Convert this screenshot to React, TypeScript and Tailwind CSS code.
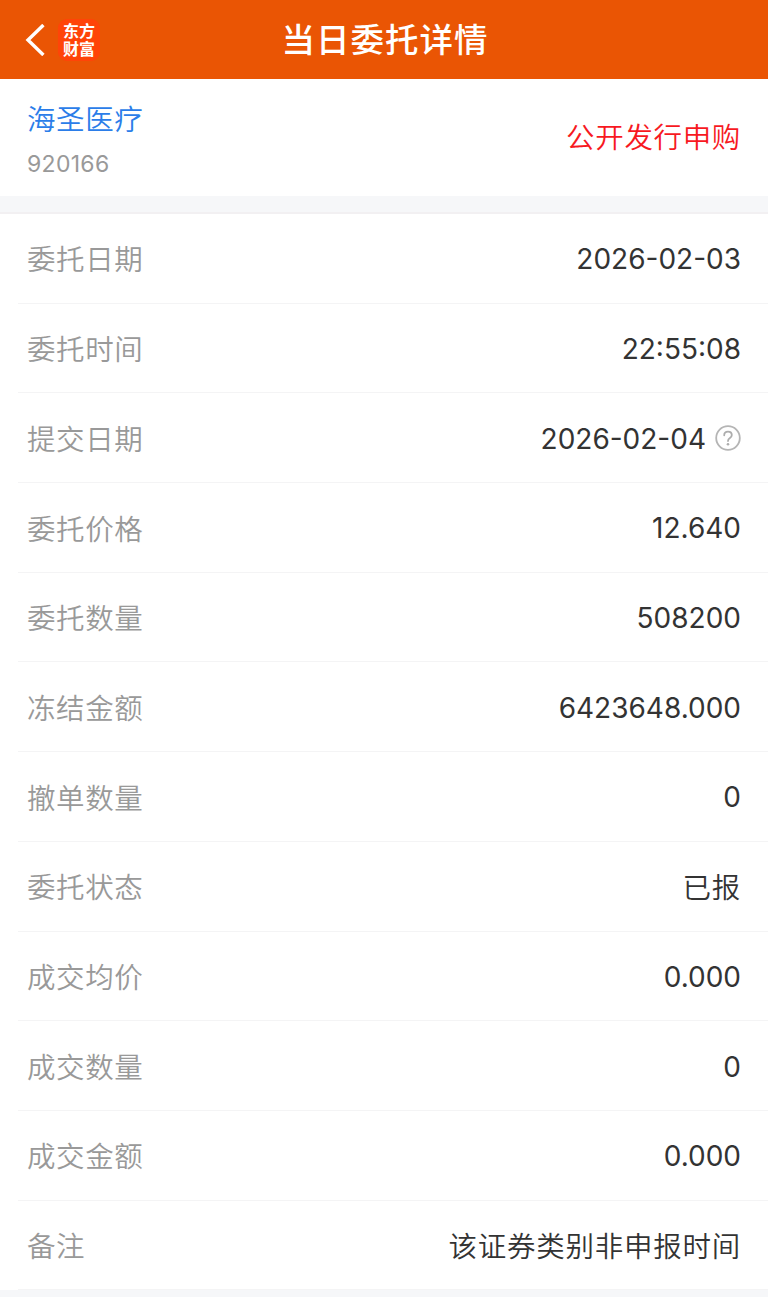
import type { ReactNode } from "react";

type DetailRow = {
  label: string;
  value: string;
  cjk?: boolean;
  extra?: ReactNode;
};

function HelpIcon() {
  return (
    <svg width="26" height="26" viewBox="0 0 26 26" fill="none" className="ml-[9px] shrink-0" aria-label="help">
      <circle cx="13" cy="13" r="11.8" stroke="#b5b5b5" strokeWidth="1.8" />
      <path d="M9.2 10.3c0-2.3 1.6-3.7 3.8-3.7s3.8 1.4 3.8 3.4c0 1.5-.8 2.3-1.9 3.1-1.3.9-1.9 1.5-1.9 3" stroke="#adadad" strokeWidth="1.8" strokeLinecap="round" strokeLinejoin="round" />
      <circle cx="13" cy="19.2" r="1.3" fill="#adadad" />
    </svg>
  );
}

const rows: DetailRow[] = [
  { label: "委托日期", value: "2026-02-03" },
  { label: "委托时间", value: "22:55:08" },
  { label: "提交日期", value: "2026-02-04", extra: <HelpIcon /> },
  { label: "委托价格", value: "12.640" },
  { label: "委托数量", value: "508200" },
  { label: "冻结金额", value: "6423648.000" },
  { label: "撤单数量", value: "0" },
  { label: "委托状态", value: "已报", cjk: true },
  { label: "成交均价", value: "0.000" },
  { label: "成交数量", value: "0" },
  { label: "成交金额", value: "0.000" },
  { label: "备注", value: "该证券类别非申报时间", cjk: true },
];

function Header() {
  return (
    <header className="grid h-[79px] grid-cols-[1fr_auto_1fr] items-center bg-[#ea5504] text-white">
      <div className="flex items-center pl-[25px]">
        <svg width="20" height="32" viewBox="0 0 20 32" fill="none" aria-label="back">
          <path d="M17.2 2.2 3 16l14.2 13.8" stroke="#fff" strokeWidth="3.4" strokeLinecap="square" />
        </svg>
        <div className="ml-[13px] flex h-[42px] w-[42px] items-center justify-center rounded-[9px] bg-[#ff4408]">
          <span className="font-['Noto_Sans_CJK_SC',sans-serif] text-[16px] leading-[17.5px] font-bold">
            东方
            <br />
            财富
          </span>
        </div>
      </div>
      <h1 className="pt-[2px] pl-[2px] text-[33.5px] leading-none font-medium tracking-[1px]">当日委托详情</h1>
      <div />
    </header>
  );
}

function Row({ label, value, cjk, extra }: DetailRow) {
  return (
    <div className="ml-[18px] flex h-[89.7px] items-center justify-between border-b border-[#f4f4f5] pr-[27px] pl-[9px]">
      <span className="pt-[5px] text-[28.5px] font-[350] tracking-[0.6px] text-[#999]">{label}</span>
      <div className="flex items-center text-[#333]">
        {cjk ? (
          <span className="pt-[5px] text-[28.5px] font-[350] tracking-[0.75px]">{value}</span>
        ) : (
          <span className="pt-[2px] text-[28px]">{value}</span>
        )}
        {extra}
      </div>
    </div>
  );
}

export default function App() {
  return (
    <div className="h-[1297px] w-full overflow-hidden bg-[#f6f7f9] font-[Inter,'Noto_Sans_CJK_SC',sans-serif]">
      <Header />
      <section className="flex h-[117px] items-center justify-between bg-white px-[27px]">
        <div className="flex flex-col pt-2">
          <span className="text-[28.5px] leading-[44px] font-[350] tracking-[0.6px] text-[#2b7de9]">海圣医疗</span>
          <span className="text-[23px] leading-[44px] tracking-[0.3px] text-[#999]">920166</span>
        </div>
        <span className="pt-[2px] text-[28.5px] font-[350] tracking-[0.65px] text-[#f7191f]">公开发行申购</span>
      </section>
      <main className="mt-4 border-t-2 border-[#f2f0f2] bg-white">
        {rows.map((row) => (
          <Row key={row.label} {...row} />
        ))}
      </main>
    </div>
  );
}
